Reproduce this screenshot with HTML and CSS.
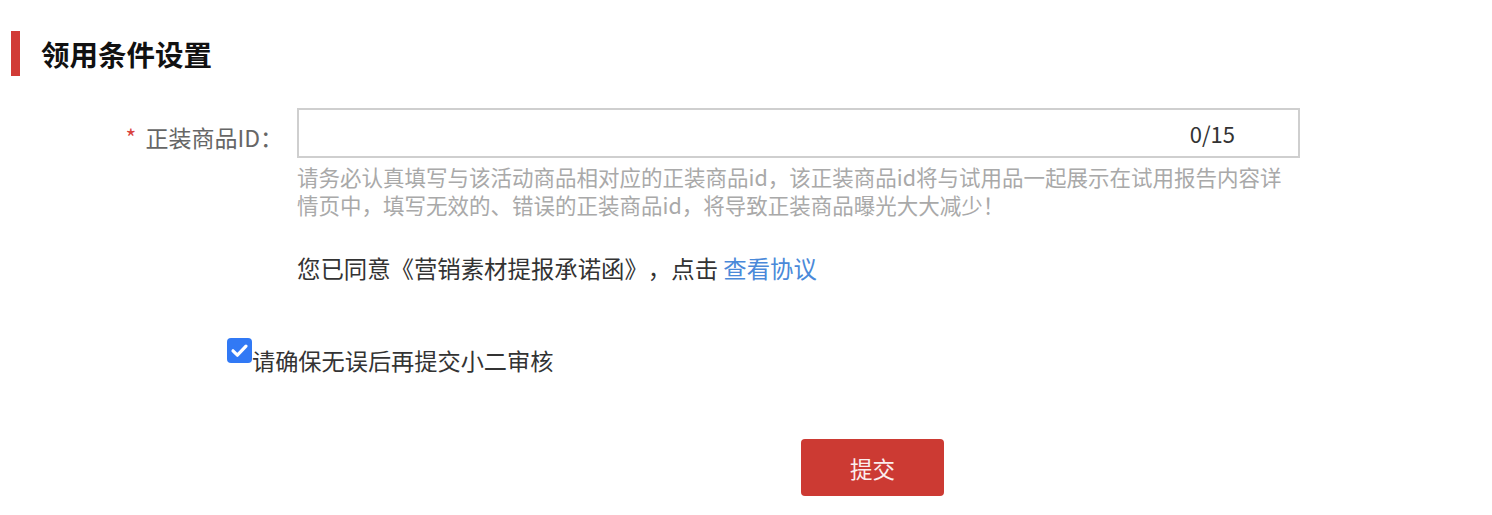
FILE: index.html
```html
<!DOCTYPE html>
<html lang="zh-CN">
<head>
<meta charset="utf-8">
<title>领用条件设置</title>
<link rel="stylesheet" href="styles.css">
</head>
<body>
<div class="page">
  <div class="section-head">
    <span class="bar"></span>
    <h2 class="title">领用条件设置</h2>
  </div>

  <div class="form-row">
    <label class="label"><span class="req">*</span> 正装商品ID：</label>
    <div class="field">
      <div class="input-box">
        <input class="text-input" type="text" value="">
        <span class="counter">0/15</span>
      </div>
      <p class="help">请务必认真填写与该活动商品相对应的正装商品id，该正装商品id将与试用品一起展示在试用报告内容详情页中，填写无效的、错误的正装商品id，将导致正装商品曝光大大减少！</p>
      <p class="consent">您已同意《营销素材提报承诺函》，点击 <a class="link" href="#">查看协议</a></p>
    </div>
  </div>

  <div class="check-row">
    <span class="checkbox">
      <svg width="25" height="25" viewBox="0 0 25 25"><path d="M6 12.8 L10.4 17.2 L19 8.2" fill="none" stroke="#fff" stroke-width="3.2" stroke-linecap="round" stroke-linejoin="round"/></svg>
    </span>
    <span class="check-text">请确保无误后再提交小二审核</span>
  </div>

  <div class="actions">
    <button class="submit" type="button">提交</button>
  </div>
</div>
</body>
</html>
```

FILE: styles.css
```css
html, body {
  margin: 0;
  padding: 0;
  background: #fff;
}

body {
  font-family: "Noto Sans CJK SC", "Noto Sans", sans-serif;
  color: #333;
  text-spacing-trim: space-all;
}

.page {
  width: 1492px;
  padding-top: 31px;
}

.section-head {
  display: flex;
  align-items: center;
  height: 45px;
  padding-left: 11px;
}

.bar {
  width: 9px;
  height: 45px;
  background: #d13b36;
}

.title {
  margin: 0 0 0 21px;
  font-size: 28.5px;
  line-height: 45px;
  font-weight: 700;
  color: #111;
}

.form-row {
  display: grid;
  grid-template-columns: 283px 1003px;
  column-gap: 14px;
  margin-top: 32px;
}

.label {
  text-align: right;
  font-size: 23px;
  line-height: 50px;
  color: #666;
  padding-top: 4px;
  white-space: nowrap;
}

.req {
  color: #d9433f;
  margin-right: 4px;
}

.field {
  display: flex;
  flex-direction: column;
}

.input-box {
  display: flex;
  align-items: center;
  height: 50px;
  box-sizing: border-box;
  border: 2px solid #cfcfcf;
  padding: 0 63px 0 10px;
}

.text-input {
  flex: 1;
  border: none;
  outline: none;
  background: transparent;
  font-family: inherit;
  font-size: 22px;
  height: 100%;
  padding: 0;
}

.counter {
  font-size: 22px;
  color: #333;
}

.help {
  margin: 5px 0 0;
  font-size: 21.5px;
  line-height: 28px;
  color: #a9a9a9;
}

.consent {
  margin: 34px 0 0;
  font-size: 23.4px;
  line-height: 30px;
  color: #333;
}

.link {
  color: #4a89d9;
  text-decoration: none;
}

.check-row {
  display: flex;
  align-items: flex-start;
  margin-top: 55px;
  padding-left: 227px;
}

.checkbox {
  display: flex;
  width: 25px;
  height: 25px;
  border-radius: 4px;
  background: #3179f5;
}

.check-text {
  padding-top: 7px;
  font-size: 23.2px;
  line-height: 30px;
  color: #333;
}

.actions {
  margin-top: 64px;
  padding-left: 801px;
}

.submit {
  width: 143px;
  height: 57px;
  border: none;
  border-radius: 4px;
  background: #cc3a33;
  color: #fbeeee;
  font-family: inherit;
  font-size: 22.5px;
  cursor: pointer;
  padding: 0;
}
```
